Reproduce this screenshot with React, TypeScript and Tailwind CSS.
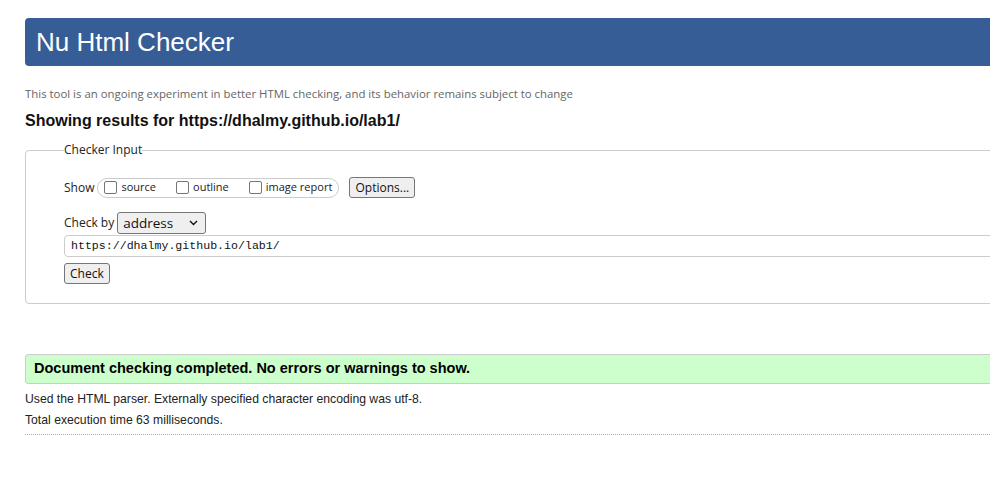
const ui = '[font-family:"Open_Sans","Noto_Sans",sans-serif]';

function Check({ label }: { label: string }) {
  return (
    <label className="flex items-center gap-[4px]">
      <span className="inline-block w-[13px] h-[13px] border border-[#767676] rounded-[2px] bg-white" />
      <span className="text-[11px] text-[#222]">{label}</span>
    </label>
  );
}

export default function App() {
  return (
    <div className="w-[990px] h-[477px] overflow-hidden bg-white font-['Liberation_Sans',Arial,sans-serif]">
      <div className="w-[1300px] pl-[25px] pt-[18px]">
        <h1 className="h-[48px] bg-[#365d96] rounded-[4px] text-white text-[26px] leading-[48px] pl-[11px]">
          Nu Html Checker
        </h1>

        <p className={`${ui} mt-[19px] text-[11.4px] text-[#666] leading-[18px]`}>
          This tool is an ongoing experiment in better HTML checking, and its behavior remains subject to change
        </p>

        <h2 className="mt-[9px] text-[16px] font-bold text-[#111] leading-[18px]">
          Showing results for https://dhalmy.github.io/lab1/
        </h2>

        <fieldset className={`${ui} mt-[13px] border border-[#ccc] rounded-[4px] pl-[38px] h-[161px]`}>
          <legend className="px-0 text-[12px] text-[#222] leading-[14px]">Checker Input</legend>

          <div className="flex items-center mt-[20px]">
            <span className="text-[12px] text-[#222] mr-[3px]">Show</span>
            <div className="flex items-center gap-[20px] h-[20px] w-[242px] border border-[#ccc] rounded-full px-[6px]">
              <Check label="source" />
              <Check label="outline" />
              <Check label="image report" />
            </div>
            <button className="ml-[10px] h-[21px] px-[5px] bg-[#efefef] border border-[#767676] rounded-[3px] text-[12px] text-[#111] leading-[18px]">
              Options...
            </button>
          </div>

          <div className="flex items-center mt-[14px]">
            <span className="text-[12px] text-[#222] mr-[3px]">Check by</span>
            <div className="flex items-center justify-between w-[89px] h-[22px] border border-[#767676] rounded-[3px] bg-[#efefef] pl-[5px] pr-[7px]">
              <span className="text-[13.5px] text-[#111]">address</span>
              <svg width="9" height="6" viewBox="0 0 9 6" fill="none" stroke="#111" strokeWidth="1.4">
                <path d="M1 1l3.5 3.5L8 1" />
              </svg>
            </div>
          </div>

          <div className="mt-[1px] h-[22px] border border-[#ccc] rounded-[4px] flex items-center pl-[6px] font-['Liberation_Mono',monospace] text-[11.6px] text-[#111]">
            https://dhalmy.github.io/lab1/
          </div>

          <button className="mt-[6px] h-[21px] px-[5px] bg-[#efefef] border border-[#767676] rounded-[3px] text-[12px] text-[#111] leading-[18px]">
            Check
          </button>
        </fieldset>

        <div className="mt-[50px] h-[30px] bg-[#ccffcc] border border-[#ccc] rounded-[3px] flex items-center pl-[8px] text-[14.5px] font-bold text-black">
          Document checking completed. No errors or warnings to show.
        </div>

        <p className="mt-[8px] text-[12.2px] text-[#222] leading-[14px]">
          Used the HTML parser. Externally specified character encoding was utf-8.
        </p>
        <p className="mt-[7px] text-[12.2px] text-[#222] leading-[14px]">Total execution time 63 milliseconds.</p>
        <div className="mt-[7px] border-t border-dotted border-[#aaa]" />
      </div>
    </div>
  );
}
